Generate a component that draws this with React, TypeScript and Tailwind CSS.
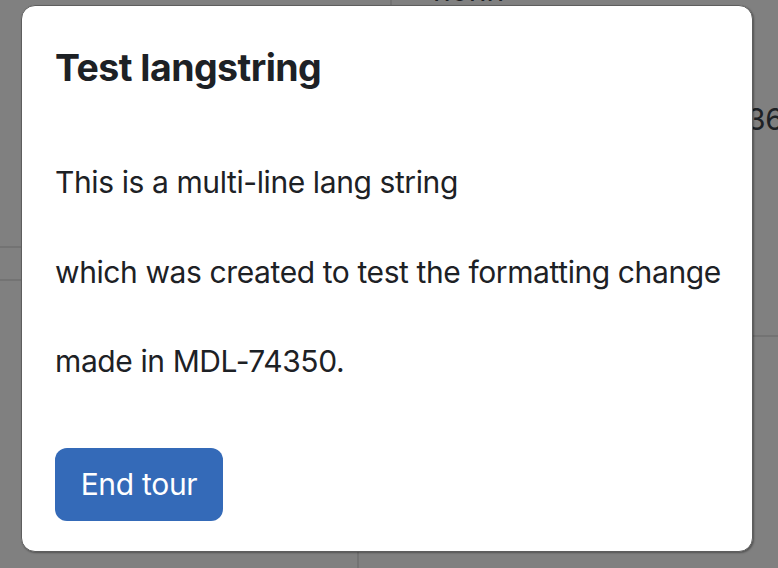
export default function App() {
  const font = { fontFamily: '"Inter", "Noto Sans", sans-serif' };

  return (
    <div
      className="relative w-full h-[568px] overflow-hidden bg-[#808080] text-[#1d2125]"
      style={font}
    >
      {/* page behind the tour step */}
      <div className="flex h-full">
        <div className="w-[21px] flex flex-col">
          <div className="h-[248px] border-b-2 border-[#737373]" />
          <div className="h-[33px] border-b-2 border-[#737373]" />
        </div>

        <div className="flex-1 flex flex-col">
          <div className="h-[5px] flex">
            <div className="ml-[369px] border-l-2 border-[#737373] pl-[41px] overflow-hidden">
              <div className="text-[30px] leading-[30px] -mt-[25px]">nonn</div>
            </div>
          </div>
          <div className="flex-1" />
          <div className="h-[16px] flex">
            <div className="ml-[336px] border-l-2 border-[#737373]" />
          </div>
        </div>

        <div className="w-[25px] flex flex-col">
          <div className="h-[104px]" />
          <div className="text-[30px] leading-[30px] -ml-[6px] whitespace-nowrap tracking-[-0.4px]">36</div>
          <div className="h-[203px] border-b-2 border-[#737373]" />
        </div>
      </div>

      {/* tour step */}
      <div className="absolute left-[21px] top-[5px] w-[732px] h-[547px] bg-white border border-[#5e5e5e] rounded-[14px] shadow-[1px_1px_2px_rgba(0,0,0,0.35)] pt-[39px] px-[33px]">
        <h2 className="text-[37.5px] leading-[45px] font-bold tracking-[-0.55px] whitespace-nowrap">
          Test langstring
        </h2>

        <div className="mt-[70px] flex flex-col gap-[44.5px] text-[30px] leading-[45px] tracking-[-0.4px] whitespace-nowrap">
          <p>This is a multi-line lang string</p>
          <p>which was created to test the formatting change</p>
          <p>made in MDL-74350.</p>
        </div>

        <button className="mt-[64px] w-[168px] h-[73px] rounded-[12px] bg-[#346ab8] text-white text-[30px] tracking-[-0.3px] flex items-center justify-center">
          End tour
        </button>
      </div>
    </div>
  );
}
